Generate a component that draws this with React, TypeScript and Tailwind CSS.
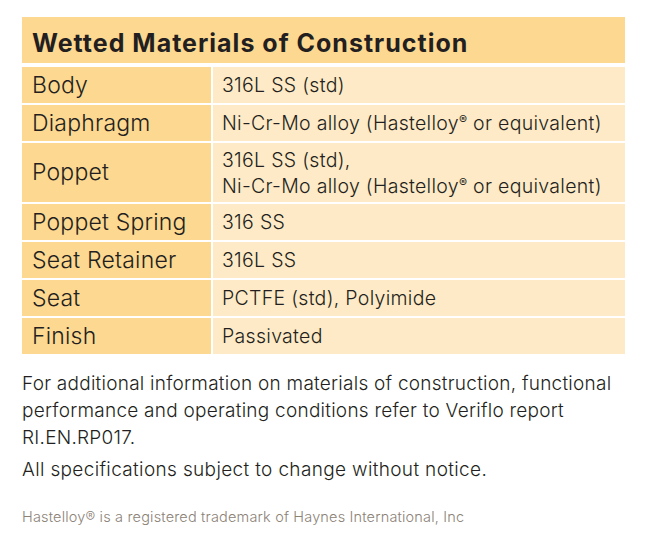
const rows: { label: string; value: React.ReactNode }[] = [
  { label: 'Body', value: '316L SS (std)' },
  {
    label: 'Diaphragm',
    value: (
      <>
        Ni-Cr-Mo alloy (Hastelloy<sup className="text-[12px] font-normal">®</sup> or equivalent)
      </>
    ),
  },
  {
    label: 'Poppet',
    value: (
      <>
        316L SS (std),
        <br />
        Ni-Cr-Mo alloy (Hastelloy<sup className="text-[12px] font-normal">®</sup> or equivalent)
      </>
    ),
  },
  { label: 'Poppet Spring', value: '316 SS' },
  { label: 'Seat Retainer', value: '316L SS' },
  { label: 'Seat', value: 'PCTFE (std), Polyimide' },
  { label: 'Finish', value: 'Passivated' },
];

export default function App() {
  return (
    <div className="w-[657px] h-[545px] bg-white text-[#231f20] font-['Inter',sans-serif] pt-[17px] pl-[22px]">
      <div className="w-[603px] flex flex-col gap-[2px]">
        <div className="h-[46px] bg-[#fdd891] flex items-center pl-[10px] pt-[7px]">
          <h2 className="font-bold text-[25px] leading-none tracking-[1px]">Wetted Materials of Construction</h2>
        </div>
        <div className="mt-[2px] grid grid-cols-[189px_1fr] gap-[2px]">
          {rows.map((r) => (
            <div key={r.label} className="contents">
              <div
                className={`bg-[#fdd891] flex items-center pl-[10px] text-[23px] font-light tracking-[0.2px] ${
                  r.label === 'Poppet' ? 'h-[59px]' : 'h-[36px]'
                }`}
              >
                {r.label}
              </div>
              <div className="bg-[#feeac6] flex items-center pl-[9px] text-[19.5px] font-light leading-[26px] tracking-[0.3px]">
                <span>{r.value}</span>
              </div>
            </div>
          ))}
        </div>
      </div>
      <div className="w-[615px] mt-[16px] text-[19px] font-light leading-[27px] tracking-[0.25px]">
        <p>
          For additional information on materials of construction, functional performance and operating conditions refer to
          Veriflo report RI.EN.RP017.
        </p>
        <p className="mt-[5px] tracking-[0.35px]">All specifications subject to change without notice.</p>
        <p className="mt-[20px] text-[14.5px] text-[#8c8276] tracking-[0.17px]">
          Hastelloy® is a registered trademark of Haynes International, Inc
        </p>
      </div>
    </div>
  );
}
